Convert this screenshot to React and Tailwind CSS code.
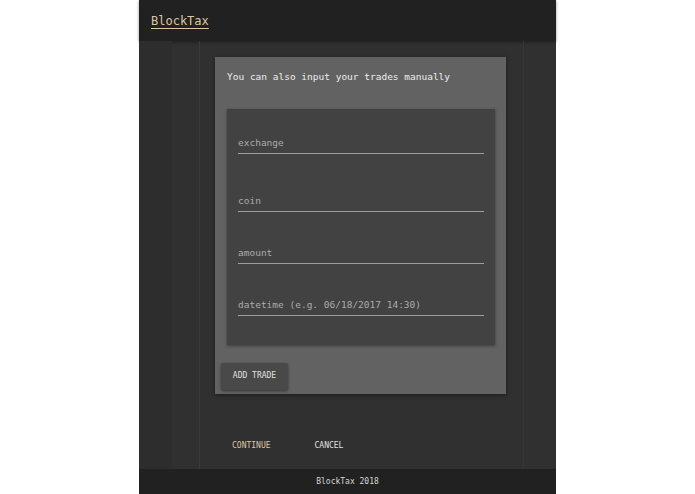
const fields = [
  { label: 'exchange', gap: 'pt-[28px]' },
  { label: 'coin', gap: 'pt-[41px]' },
  { label: 'amount', gap: 'pt-[35px]' },
  { label: 'datetime (e.g. 06/18/2017 14:30)', gap: 'pt-[35px]' },
]

function Field({ label, gap }) {
  return (
    <div className={gap}>
      <div className="border-b border-[#9e9e9e] pb-[4px] text-[9.5px] leading-[12px] text-[#ababab]">{label}</div>
    </div>
  )
}

export default function App() {
  return (
    <div
      className="flex min-h-[494px] justify-center bg-white"
      style={{ fontFamily: '"DejaVu Sans Mono", "Liberation Mono", monospace' }}
    >
      <div className="flex w-[417px] flex-col bg-[#303030]">
        <header className="flex h-[41px] items-center bg-[#212121] px-[12px] shadow-[0_1px_3px_rgba(0,0,0,0.4)]">
          <a href="#" className="text-[12px] text-[#dcc6a3] underline underline-offset-[3px]">
            BlockTax
          </a>
        </header>

        <main className="flex flex-1">
          <div className="w-[33px] bg-[#2d2d2d]" />
          <div className="w-[28px] border-r border-[#3a3a3a]" />
          <div className="flex flex-1 flex-col pl-[15px]">
            <section className="mt-[16px] w-[291px] bg-[#626262] shadow-[0_1px_4px_rgba(0,0,0,0.45)]">
              <p className="px-[12px] pt-[13px] text-[9.5px] leading-[14px] text-[#eeeeee]">
                You can also input your trades manually
              </p>
              <div className="ml-[12px] mr-[11px] mt-[25px] h-[236px] bg-[#424242] px-[11px] shadow-[0_1px_3px_rgba(0,0,0,0.4)]">
                {fields.map((f) => (
                  <Field key={f.label} {...f} />
                ))}
              </div>
              <div className="px-[6px] pb-[4px] pt-[16px]">
                <button className="h-[27px] w-[67px] rounded-[2px] bg-[#494949] text-[8px] text-[#e0e0e0] shadow-[0_1px_3px_rgba(0,0,0,0.45)]">
                  ADD TRADE
                </button>
              </div>
            </section>
            <div className="mt-[45px] flex gap-[44px] pl-[17px] text-[8px] leading-[14px]">
              <button className="text-[#dcc6a3]">CONTINUE</button>
              <button className="text-[#e0e0e0]">CANCEL</button>
            </div>
          </div>
          <div className="w-[33px] border-l border-[#353535]" />
        </main>

        <footer className="flex h-[25px] items-center justify-center bg-[#212121] text-[8px] text-[#d6d6d6]">
          BlockTax 2018
        </footer>
      </div>
    </div>
  )
}
